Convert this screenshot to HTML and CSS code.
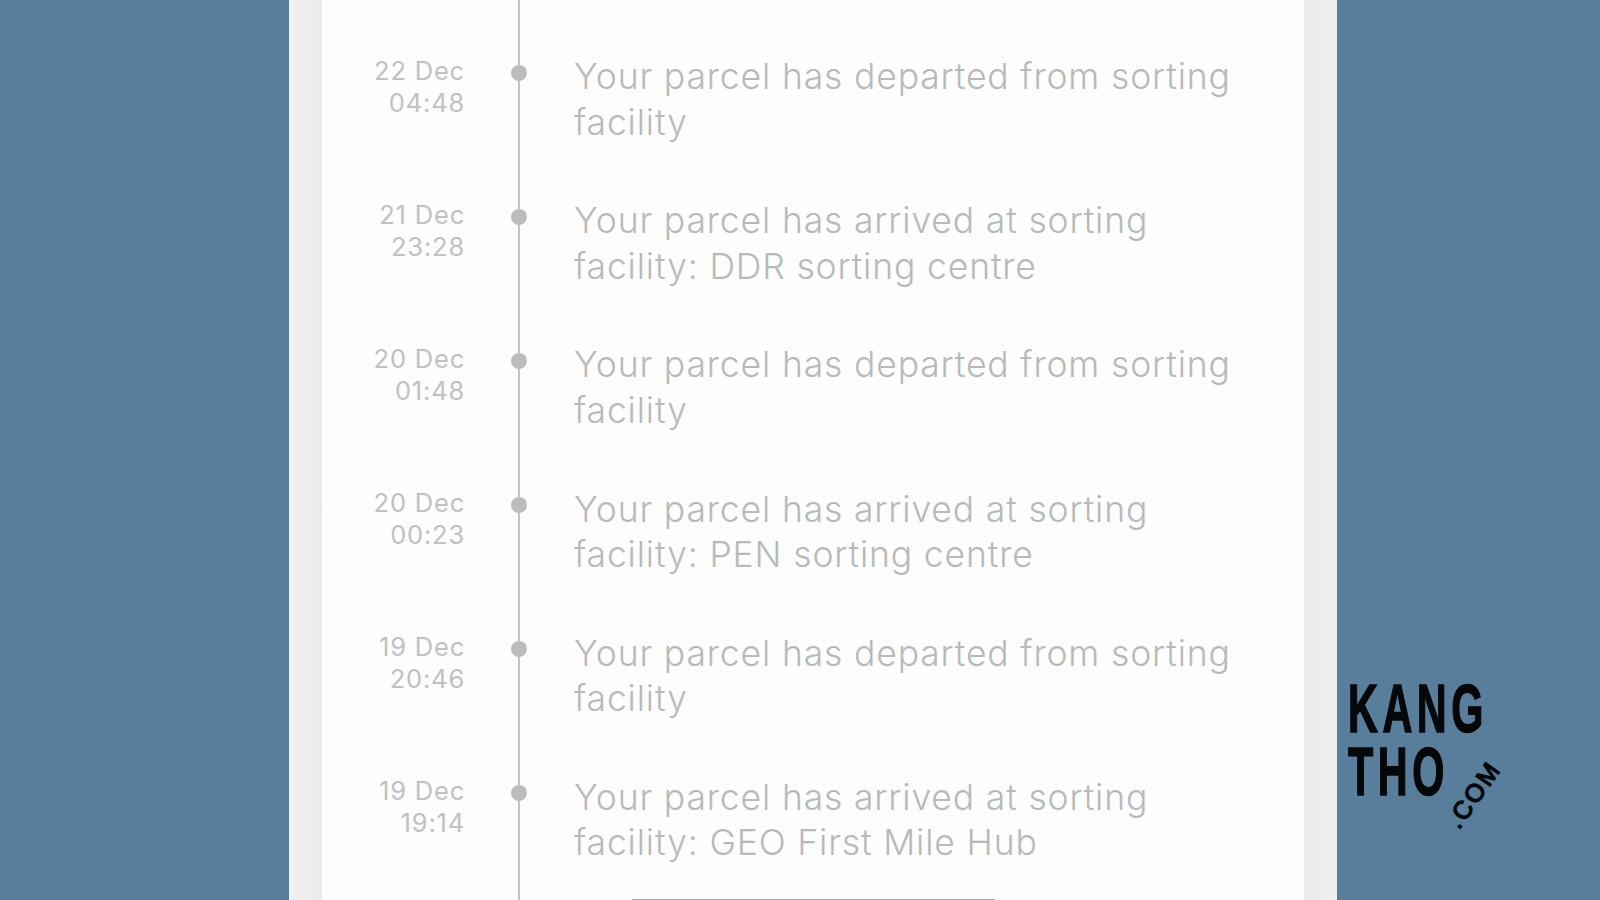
FILE: index.html
```html
<!DOCTYPE html>
<html lang="en">
<head>
    <meta charset="UTF-8">
    <meta name="viewport" content="width=device-width, initial-scale=1.0">
    <title>Parcel tracking</title>
    <link rel="stylesheet" href="styles.css">
</head>
<body>
    <div class="phone">
        <div class="panel">
            <div class="timeline">
                <div class="row">
                    <div class="time">22 Dec<br>04:48</div>
                    <div class="dot-col"><span class="dot"></span></div>
                    <div class="message">Your parcel has departed from sorting facility</div>
                </div>
                <div class="row">
                    <div class="time">21 Dec<br>23:28</div>
                    <div class="dot-col"><span class="dot"></span></div>
                    <div class="message">Your parcel has arrived at sorting facility: DDR sorting centre</div>
                </div>
                <div class="row">
                    <div class="time">20 Dec<br>01:48</div>
                    <div class="dot-col"><span class="dot"></span></div>
                    <div class="message">Your parcel has departed from sorting facility</div>
                </div>
                <div class="row">
                    <div class="time">20 Dec<br>00:23</div>
                    <div class="dot-col"><span class="dot"></span></div>
                    <div class="message">Your parcel has arrived at sorting facility: PEN sorting centre</div>
                </div>
                <div class="row">
                    <div class="time">19 Dec<br>20:46</div>
                    <div class="dot-col"><span class="dot"></span></div>
                    <div class="message">Your parcel has departed from sorting facility</div>
                </div>
                <div class="row">
                    <div class="time">19 Dec<br>19:14</div>
                    <div class="dot-col"><span class="dot"></span></div>
                    <div class="message">Your parcel has arrived at sorting facility: GEO First Mile Hub</div>
                </div>
            </div>
            <div class="home-bar"></div>
        </div>
    </div>

    <div class="logo">
        <div class="logo-line">KANG</div>
        <div class="logo-line">THO</div>
        <div class="logo-com">.COM</div>
    </div>
</body>
</html>
```

FILE: styles.css
```css
html, body {
    height: 100%;
}
body {
    margin: 0;
    background-color: #587e9c;
    font-family: Inter, "Liberation Sans", sans-serif;
    overflow: hidden;
}
.phone {
    box-sizing: border-box;
    width: 1048px;
    height: 900px;
    margin-left: 289px;
    padding: 0 33px;
    background: linear-gradient(to right, #f2f0f1 0, #e9eae9 33px, #e9eae9 1015px, #eff0ef 1048px);
}
.panel {
    position: relative;
    height: 900px;
    background-color: #fcfdfc;
    overflow: hidden;
}
.timeline {
    position: relative;
}
.timeline::before {
    content: "";
    position: absolute;
    left: 196px;
    top: 0;
    width: 2px;
    height: 900px;
    background-color: #c2c4c3;
}
.row {
    display: grid;
    grid-template-columns: 143px 109px 1fr;
    height: 144.2px;
}
.row:first-child {
    padding-top: 54px;
}
.time {
    padding-top: 0.5px;
    font-size: 25.5px;
    line-height: 32px;
    letter-spacing: 0.8px;
    text-align: right;
    color: #c0c2c1;
}
.dot-col {
    position: relative;
}
.dot {
    position: absolute;
    left: 46px;
    top: 10.5px;
    width: 16px;
    height: 16px;
    border-radius: 50%;
    background-color: #bbbdbc;
}
.message {
    width: 680px;
    font-size: 35.5px;
    font-weight: 350;
    line-height: 45.5px;
    letter-spacing: 0.85px;
    color: #b7bab9;
}
.home-bar {
    position: absolute;
    left: 310px;
    bottom: 0;
    width: 363px;
    height: 1px;
    background-color: #a8aaa9;
}
.logo {
    position: absolute;
    left: 1348px;
    top: 677px;
    width: 170px;
    font-family: "Liberation Sans Narrow", "Liberation Sans", sans-serif;
    font-weight: bold;
    color: #050708;
}
.logo-line {
    font-size: 69px;
    line-height: 63px;
    letter-spacing: 7.5px;
    -webkit-text-stroke: 1.5px #050708;
    transform: scaleX(0.6);
    transform-origin: left top;
}
.logo-com {
    position: absolute;
    left: 88px;
    top: 105px;
    font-size: 25px;
    line-height: 25px;
    letter-spacing: 2.5px;
    font-weight: normal;
    -webkit-text-stroke: 1.4px #050708;
    transform: rotate(-55deg);
}
```
